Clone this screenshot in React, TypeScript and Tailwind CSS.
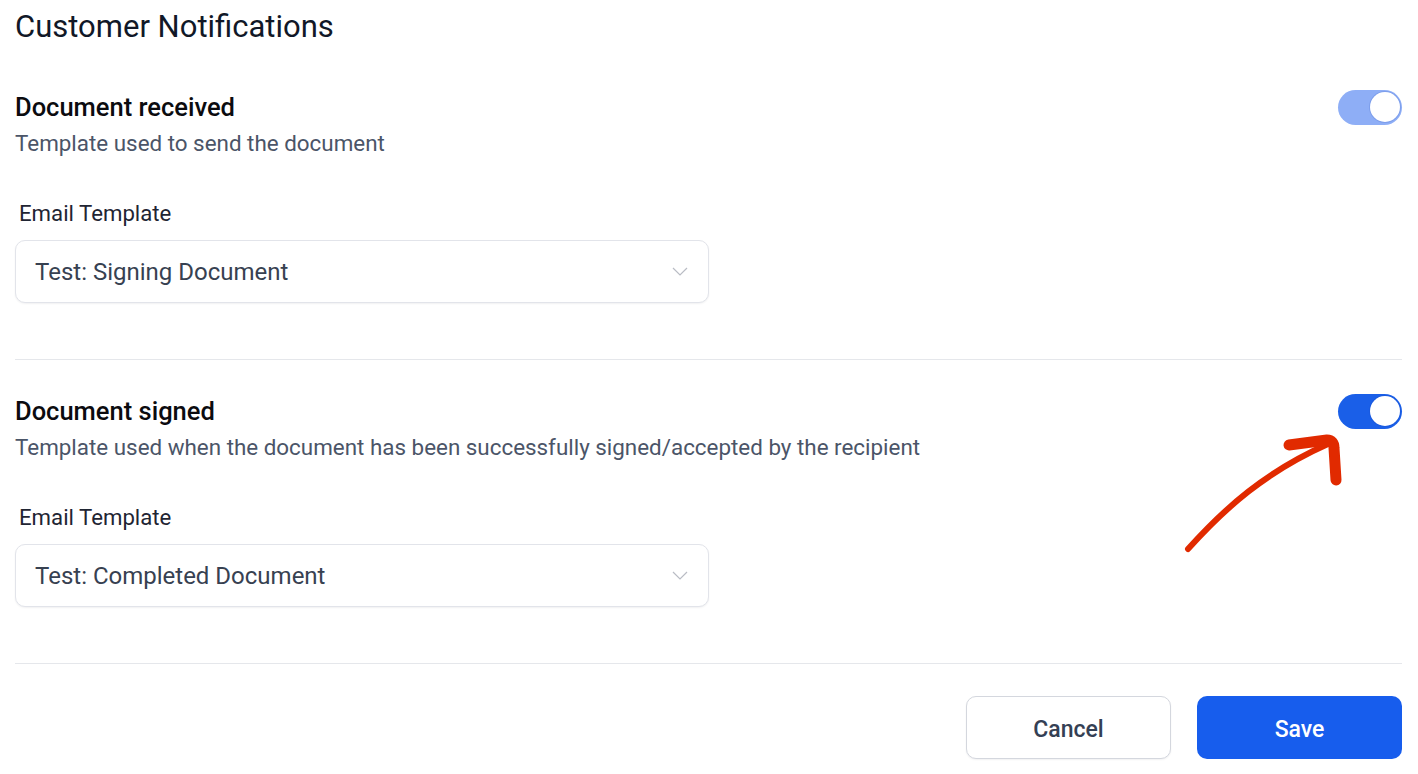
import { useState } from 'react';

type ToggleProps = { on: boolean; dim?: boolean; onChange: () => void };

function Toggle({ on, dim, onChange }: ToggleProps) {
  return (
    <button
      type="button"
      onClick={onChange}
      className={`relative h-[35px] w-[64px] shrink-0 rounded-full ${dim ? 'bg-[#8eaef6]' : 'bg-[#1a5fe8]'}`}
    >
      <span
        className={`absolute top-[2.5px] h-[30px] w-[30px] rounded-full bg-white shadow-[0_0_0_1px_rgba(30,64,175,0.15)] ${on ? 'left-[32px]' : 'left-[2.5px]'}`}
      />
    </button>
  );
}

function Select({ value }: { value: string }) {
  return (
    <div className="mt-[15px] flex h-[63px] w-[694px] items-center justify-between rounded-[10px] border border-[#e2e4ea] bg-white pl-[19px] pr-[20px] shadow-[0_1px_2px_rgba(16,24,40,0.06)]">
      <span className="text-[24px] leading-7 text-[#374151]">{value}</span>
      <svg width="16" height="9" viewBox="0 0 16 9" fill="none">
        <polyline points="1,1 8,8 15,1" stroke="#b9bcc4" strokeWidth="1.2" />
      </svg>
    </div>
  );
}

type SectionProps = {
  title: string;
  desc: string;
  template: string;
  dim?: boolean;
  first?: boolean;
};

function Section({ title, desc, template, dim, first }: SectionProps) {
  const [on, setOn] = useState(true);
  return (
    <div className={`border-b border-[#e5e7eb] pb-[56px] ${first ? 'pt-[48px]' : 'pt-[37px]'}`}>
      <div className="flex h-7 items-center justify-between">
        <h2 className="text-[25.5px] font-medium leading-7 text-[#0b0b0f]">{title}</h2>
        <Toggle on={on} dim={dim} onChange={() => setOn(!on)} />
      </div>
      <p className="mt-2 text-[22.4px] leading-7 text-[#4b5568]">{desc}</p>
      <label className="mt-[44px] block pl-[4px] text-[22.2px] leading-6 text-[#1f2533]">Email Template</label>
      <Select value={template} />
    </div>
  );
}

export default function App() {
  return (
    <div className="relative min-h-screen bg-white pl-[15px] pr-4 font-['Roboto',sans-serif]">
      <h1 className="pt-[9px] text-[31px] leading-9 text-[#111827]">Customer Notifications</h1>

      <Section
        first
        dim
        title="Document received"
        desc="Template used to send the document"
        template="Test: Signing Document"
      />
      <Section
        title="Document signed"
        desc="Template used when the document has been successfully signed/accepted by the recipient"
        template="Test: Completed Document"
      />

      <div className="flex justify-end gap-[26px] pt-8">
        <button className="h-[63px] w-[205px] rounded-[10px] border border-[#d4d7de] bg-white pt-[4px] text-[23px] font-medium leading-none text-[#344054] shadow-[0_1px_2px_rgba(16,24,40,0.06)]">
          Cancel
        </button>
        <button className="h-[63px] w-[205px] rounded-[10px] bg-[#175ded] pt-[4px] text-[23px] font-medium leading-none text-white">
          Save
        </button>
      </div>

      <svg
        className="pointer-events-none absolute left-[1170px] top-[420px]"
        width="180"
        height="140"
        viewBox="0 0 180 140"
        fill="none"
      >
        <path d="M18 129 C 55 88, 95 52, 158 24" stroke="#e12a00" strokeWidth="6" strokeLinecap="round" />
        <path d="M119 25 L157 20 Q164 20 164 28 L166 60" stroke="#e12a00" strokeWidth="11" strokeLinecap="round" strokeLinejoin="round" />
      </svg>
    </div>
  );
}
